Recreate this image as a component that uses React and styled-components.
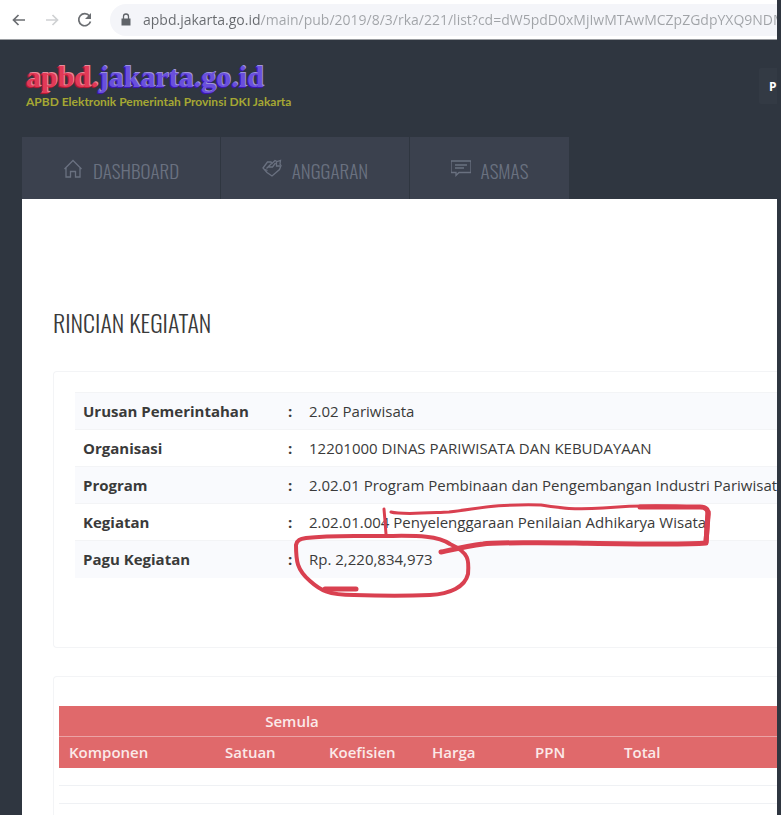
import React from "react";
import styled, { createGlobalStyle } from "styled-components";

const menus = [
  { icon: "home", name: "DASHBOARD", width: 198 },
  { icon: "tag", name: "ANGGARAN", width: 188 },
  { icon: "chat", name: "ASMAS", width: 159 },
];

const details = [
  { label: "Urusan Pemerintahan", value: "2.02 Pariwisata" },
  { label: "Organisasi", value: "12201000 DINAS PARIWISATA DAN KEBUDAYAAN" },
  {
    label: "Program",
    value: "2.02.01 Program Pembinaan dan Pengembangan Industri Pariwisata",
  },
  {
    label: "Kegiatan",
    value: "2.02.01.004 Penyelenggaraan Penilaian Adhikarya Wisata",
  },
  { label: "Pagu Kegiatan", value: "Rp. 2,220,834,973" },
];

const columns = [
  { name: "Komponen", width: 156 },
  { name: "Satuan", width: 104 },
  { name: "Koefisien", width: 103 },
  { name: "Harga", width: 103 },
  { name: "PPN", width: 89 },
  { name: "Total" },
];

const MenuIcon = ({ name }) => (
  <MenuSvg viewBox="0 0 20 20" aria-hidden="true">
    {name === "home" && (
      <path d="M1.500 11L10 2.500l8.500 8.500M3 10v9h4.500v-5.500h5V19H17v-9" />
    )}
    {name === "tag" && (
      <>
        <path d="M1 10l4.500-6h3.500l1 1.500L13 2.500l2 1 3.500-1-.5 3.500 1 1.500-1.500 4L10 18l-5-3.500z" />
        <path d="M4.500 10.500L9.500 5.500M6.500 9h4l3-4M14.500 4v4h3.500M3 11.500l2.500 1" />
      </>
    )}
    {name === "chat" && (
      <>
        <path d="M0 3h20v11.500H8l-3 3v-3H0z" />
        <path d="M4 7h12M4 10h9" />
      </>
    )}
  </MenuSvg>
);

const App = () => {
  return (
    <>
      <GlobalStyle />
      <Frame>
        <BrowserBar>
          <BrowserButton aria-label="Back">
            <svg width="16" height="16" viewBox="0 0 16 16">
              <path d="M14 8H2.500M7.500 3L2.500 8l5 5" />
            </svg>
          </BrowserButton>
          <BrowserButton aria-label="Forward" disabled>
            <svg width="16" height="16" viewBox="0 0 16 16">
              <path d="M2 8h11.500M8.500 3l5 5-5 5" />
            </svg>
          </BrowserButton>
          <BrowserButton aria-label="Reload">
            <svg width="16" height="16" viewBox="0 0 16 16">
              <path d="M13.500 9.500A6 6 0 1 1 12.500 4" />
              <path d="M14 1v6H8z" fill="#6b6e72" stroke="none" />
            </svg>
          </BrowserButton>
          <AddressBar>
            <svg width="10" height="14" viewBox="0 0 10 14" aria-hidden="true">
              <path d="M0.500 5.500h9v7h-9z" fill="#5f6368" />
              <path
                d="M2.500 6V3.500a2.500 2.500 0 0 1 5 0V6"
                fill="none"
                stroke="#5f6368"
                strokeWidth="1.300"
              />
            </svg>
            <AddressInput
              aria-label="Address"
              readOnly
              value="apbd.jakarta.go.id/main/pub/2019/8/3/rka/221/list?cd=dW5pdD0xMjIwMTAwMCZpZGdpYXQ9NDM"
            />
          </AddressBar>
        </BrowserBar>

        <Header>
          <Brand>
            <Logo href="#">
              <LogoRed>apbd.</LogoRed>jakarta.go.id
            </Logo>
            <Tagline>APBD Elektronik Pemerintah Provinsi DKI Jakarta</Tagline>
          </Brand>
          <HeaderButton>P</HeaderButton>
        </Header>

        <Menu>
          {menus.map((menu) => (
            <MenuLink key={menu.name} href="#" $width={menu.width}>
              <MenuIcon name={menu.icon} />
              {menu.name}
            </MenuLink>
          ))}
        </Menu>

        <Content>
          <Title>RINCIAN KEGIATAN</Title>

          <DetailCard>
            <DetailTable>
              <tbody>
                {details.map((item) => (
                  <DetailRow key={item.label}>
                    <DetailLabel scope="row">{item.label}</DetailLabel>
                    <Colon>:</Colon>
                    <DetailValue>{item.value}</DetailValue>
                  </DetailRow>
                ))}
              </tbody>
            </DetailTable>
            <Marker viewBox="290 495 425 105" aria-hidden="true">
              <path d="M384 508l1 12 1 13" strokeWidth="3" />
              <path
                d="M391 511c10 3 35 1 58 0 30-3 40-8 92-7 20 3 32 5 62 3 35-3 60-3 94-1"
                strokeWidth="3"
              />
              <path
                d="M640 506h60c6 0 9 3 8 9l-2 26"
                strokeWidth="5"
              />
              <path
                d="M708 511l-2 31c-22 2-71 1-131 0-50 0-80-1-92 1-15 2-28 5-42 8"
                strokeWidth="5"
              />
              <path
                d="M296 544c1-5 4-6 10-7 24-3 44-2 74-2 30 0 56-2 70 8 20 9 19 17 18 30-3 13-18 20-38 21-20 1-50 1-76 0-26 0-34-5-44-14-13-11-14-20-14-36z"
                strokeWidth="4"
              />
              <path d="M325 588h31" strokeWidth="5" />
            </Marker>
          </DetailCard>

          <BudgetCard>
            <BudgetTable>
              <colgroup>
                {columns.map((column) => (
                  <Col key={column.name} $width={column.width} />
                ))}
              </colgroup>
              <thead>
                <tr>
                  <GroupHead colSpan={4}>Semula</GroupHead>
                  <GroupHead colSpan={2} />
                </tr>
                <tr>
                  {columns.map((column) => (
                    <ColumnHead key={column.name}>{column.name}</ColumnHead>
                  ))}
                </tr>
              </thead>
              <tbody>
                <BudgetRow>
                  <td colSpan={6} />
                </BudgetRow>
                <BudgetRow>
                  <td colSpan={6} />
                </BudgetRow>
              </tbody>
            </BudgetTable>
          </BudgetCard>
        </Content>
      </Frame>
    </>
  );
};

const GlobalStyle = createGlobalStyle`
  * {
    box-sizing: border-box;
  }

  body {
    margin: 0;
    background-color: #2f3640;
    font-family: "Open Sans", "Noto Sans", sans-serif;
    font-size: 15px;
    color: #3a3a3a;
  }
`;

const Frame = styled.div`
  display: flex;
  flex-direction: column;
  min-height: 100vh;
  margin-right: 4px;
  overflow: hidden;
`;

const BrowserBar = styled.div`
  display: flex;
  align-items: center;
  height: 40px;
  padding-left: 11px;
  background-color: #fff;
  border-bottom: 1px solid #9a9da1;
`;

const BrowserButton = styled.button`
  display: flex;
  margin-right: 17px;
  padding: 0;
  border: none;
  background: none;

  svg {
    fill: none;
    stroke: ${({ disabled }) => (disabled ? "#cfd1d3" : "#6b6e72")};
    stroke-width: 1.7;
  }
`;

const AddressBar = styled.div`
  flex: 1;
  display: flex;
  align-items: center;
  height: 32px;
  padding-left: 11px;
  border-radius: 16px 0 0 16px;
  background-color: #f4f5f9;
`;

const AddressInput = styled.input`
  flex: 1;
  min-width: 0;
  margin-left: 12px;
  padding: 0;
  border: none;
  outline: none;
  font-family: "Open Sans", sans-serif;
  font-size: 14px;
  /* host name darker than the path */
  background: linear-gradient(to right, #66696d 117px, #a0a3a7 117px);
  background-clip: text;
  -webkit-text-fill-color: transparent;
`;

const Header = styled.header`
  display: flex;
  justify-content: space-between;
  height: 97px;
  padding: 20px 0 0 26px;
`;

const Brand = styled.div`
  display: flex;
  flex-direction: column;
`;

const Logo = styled.a`
  font-family: "Liberation Serif", serif;
  font-size: 30px;
  line-height: 34px;
  font-weight: bold;
  color: #6a4fdc;
  text-decoration: none;
  text-shadow: 1px -1px 0 #9d92dc, -1px 1px 1px #3d12c8;
`;

const LogoRed = styled.span`
  color: #e23a56;
  text-shadow: 1px -1px 0 #e88a9a, -1px 1px 1px #c81432;
`;

const Tagline = styled.span`
  font-family: "Lato", "Open Sans", sans-serif;
  font-size: 12px;
  line-height: 16px;
  font-weight: bold;
  color: #a5a733;
  white-space: nowrap;
`;

const HeaderButton = styled.button`
  width: 18px;
  height: 36px;
  margin-top: 8px;
  padding: 0 0 0 10px;
  border: none;
  border-radius: 2px 0 0 2px;
  background-color: #333a44;
  color: #fff;
  font-family: inherit;
  font-size: 12px;
  font-weight: bold;
  text-align: left;
`;

const Menu = styled.nav`
  display: flex;
  gap: 1px;
  margin-left: 22px;
`;

const MenuLink = styled.a`
  display: flex;
  align-items: center;
  justify-content: center;
  gap: 10px;
  width: ${({ $width }) => $width}px;
  height: 62px;
  padding-top: 4px;
  background-color: #3b414e;
  color: #6a7180;
  font-family: "Oswald", "Roboto Condensed", sans-serif;
  font-size: 19px;
  font-weight: 300;
  text-decoration: none;
`;

const MenuSvg = styled.svg`
  width: 20px;
  height: 20px;
  margin-bottom: 4px;
  fill: none;
  stroke: #6a7180;
  stroke-width: 1.3;
`;

const Content = styled.main`
  flex: 1;
  display: flex;
  flex-direction: column;
  margin-left: 22px;
  padding: 107px 0 0 31px;
  background-color: #fff;
`;

const Title = styled.h1`
  margin: 0 0 33px;
  font-family: "Oswald", "Roboto Condensed", sans-serif;
  font-size: 24px;
  line-height: 32px;
  font-weight: 350;
`;

const Card = styled.section`
  border: 1px solid #f3f4f6;
  border-right: none;
  border-radius: 4px 0 0 4px;
`;

const DetailCard = styled(Card)`
  position: relative;
  margin-bottom: 28px;
  padding: 20px 0 69px 21px;
`;

const DetailTable = styled.table`
  width: 100%;
  border-collapse: collapse;
`;

const DetailRow = styled.tr`
  height: 37px;
  border-top: 1px solid #f3f4f6;

  &:nth-child(odd) {
    background-color: #f9fafd;
  }
`;

const DetailLabel = styled.th`
  width: 208px;
  padding: 0 8px;
  text-align: left;
`;

const Colon = styled.td`
  width: 18px;
  padding: 0 5px;
  font-weight: bold;
`;

const DetailValue = styled.td`
  max-width: 0;
  padding: 0 0 0 8px;
  white-space: nowrap;
  overflow: hidden;
`;

/* red pen strokes over the activity and its ceiling */
const Marker = styled.svg`
  position: absolute;
  top: 124px;
  left: 236px;
  width: 425px;
  height: 105px;
  fill: none;
  stroke: #d94050;
  stroke-linecap: round;
  stroke-linejoin: round;
  pointer-events: none;
`;

const BudgetCard = styled(Card)`
  flex: 1;
  padding: 29px 0 0 5px;
  border-bottom: none;
  border-radius: 4px 0 0 0;
`;

const BudgetTable = styled.table`
  width: 100%;
  table-layout: fixed;
  border-collapse: collapse;
`;

const Col = styled.col`
  width: ${({ $width }) => ($width ? `${$width}px` : "auto")};
`;

const Head = styled.th`
  height: 31px;
  padding: 0 10px;
  background-color: #e0696b;
  color: #fbe9e9;
  font-weight: 600;
`;

const GroupHead = styled(Head)`
  border-bottom: 1px solid #eba3a5;
`;

const ColumnHead = styled(Head)`
  text-align: left;
`;

const BudgetRow = styled.tr`
  height: 18px;
  border-bottom: 1px solid #eff1f4;
`;

export default App;
